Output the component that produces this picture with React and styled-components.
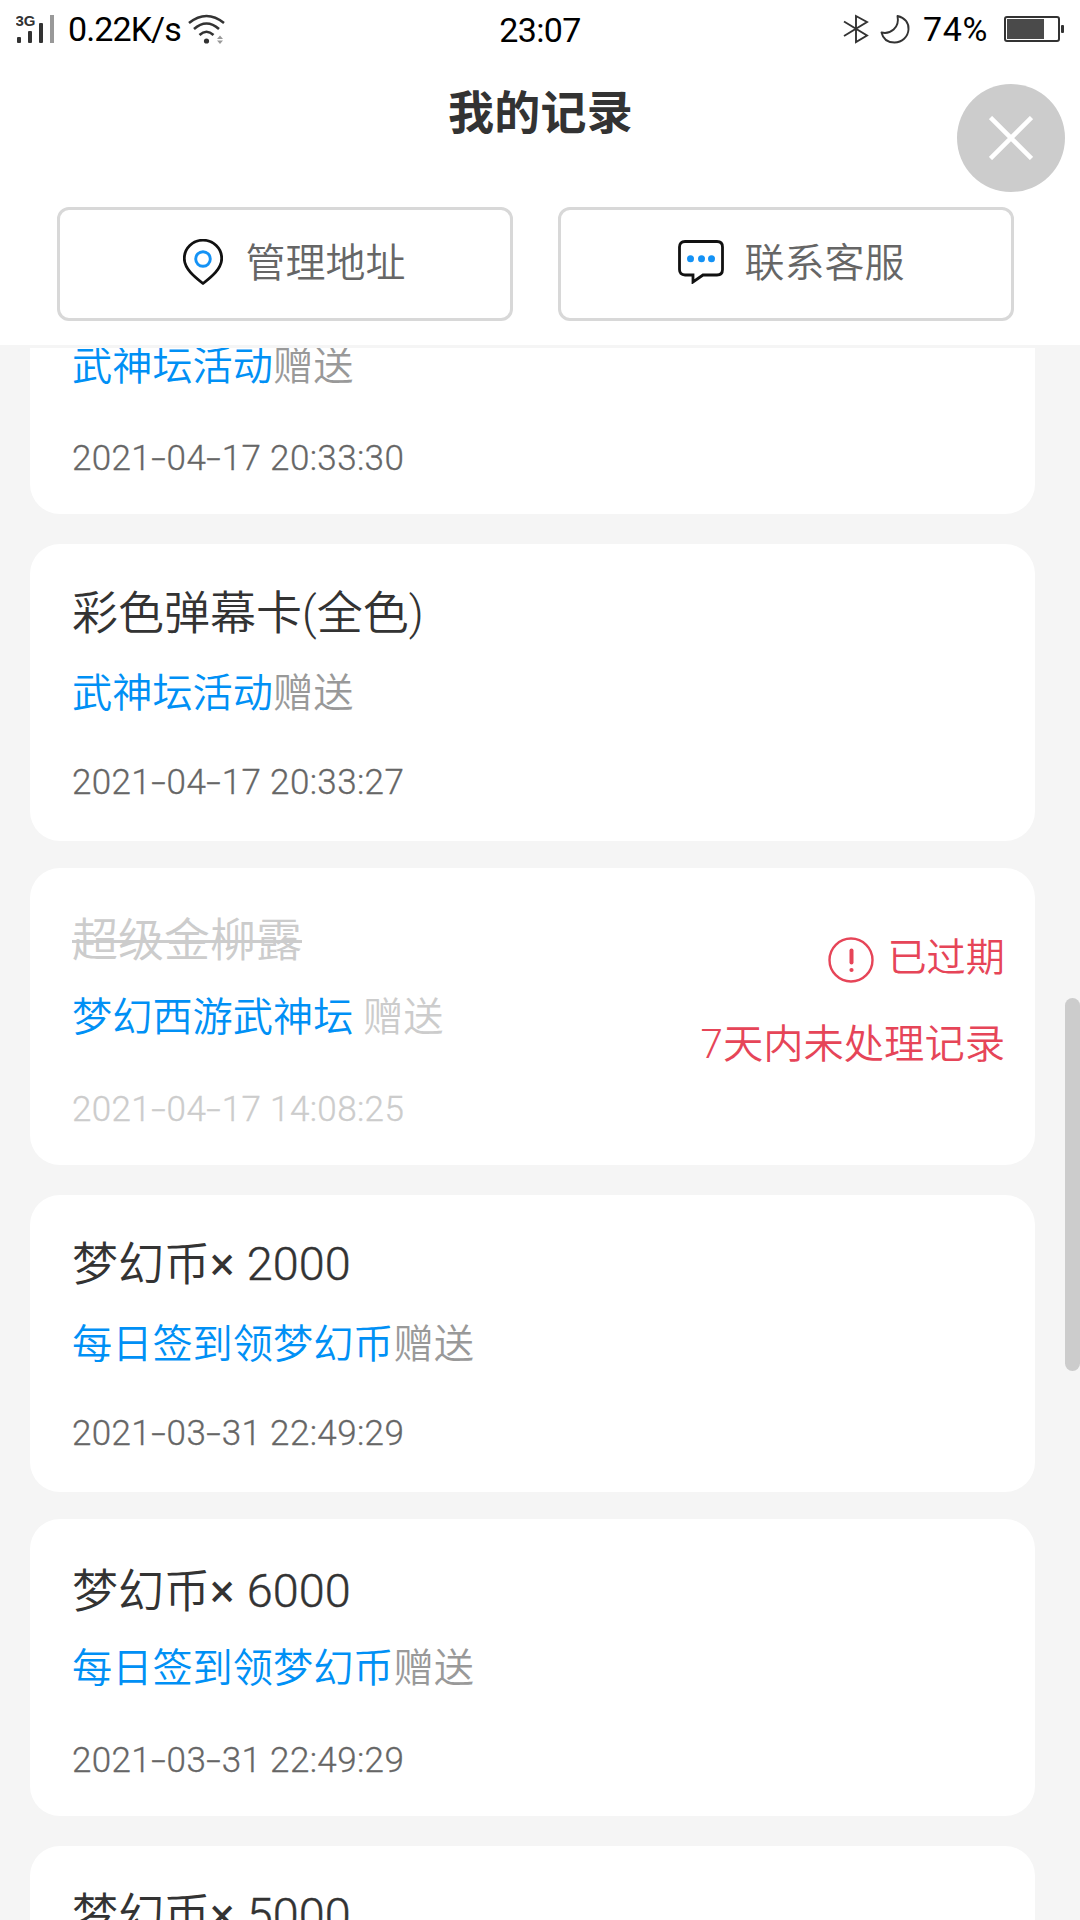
import React, { Fragment } from 'react';

// External packages
import styled, { createGlobalStyle, css } from 'styled-components';

const GlobalStyle = createGlobalStyle`
  * {
    box-sizing: border-box;
  }

  body {
    margin: 0;
    overflow: hidden;
    background: #f5f5f5;
    font-family: Roboto, 'Noto Sans CJK SC', sans-serif;
    font-weight: 350;
  }
`;

const Page = styled.div`
  display: flex;
  flex-direction: column;
  position: relative;
  width: 1080px;
  height: 1920px;
  overflow: hidden;
`;

const Header = styled.header`
  flex: none;
  height: 348px;
  background: #fff;
  border-bottom: 3px solid #f5f5f5;
`;

const StatusBar = styled.div`
  display: grid;
  grid-template-columns: 1fr auto 1fr;
  align-items: center;
  height: 55px;
  padding: 0 15px 0 16px;
  color: #000;
  font-family: Roboto, sans-serif;
  font-weight: 400;
  font-size: 34px;
  line-height: 54px;

  svg {
    display: block;
    flex: none;
  }
`;

const StatusGroup = styled.div`
  display: flex;
  align-items: center;
  justify-content: ${(props) => props.$align || 'flex-start'};
`;

const Speed = styled.span`
  margin: 0 7px 0 13px;
  letter-spacing: -0.9px;
`;

const Clock = styled.span`
  padding: 3px 1px 0 0;
  letter-spacing: -0.6px;
`;

const Percent = styled.span`
  margin: 0 16px 0 13px;
  letter-spacing: 0.6px;
`;

const Title = styled.h1`
  margin: 26px 0 0;
  padding-left: 1px;
  color: #333;
  font-size: 46px;
  font-weight: 700;
  letter-spacing: 0.3px;
  line-height: 64px;
  text-align: center;
`;

const Actions = styled.div`
  display: grid;
  grid-template-columns: 1fr 1fr;
  gap: 45px;
  padding: 62px 66px 0 57px;
`;

const ActionButton = styled.button`
  display: flex;
  align-items: center;
  justify-content: center;
  gap: ${(props) => props.$gap}px;
  height: 114px;
  padding: 0 0 4px ${(props) => props.$indent}px;
  background: #fff;
  border: 3px solid #d8d8d8;
  border-radius: 12px;
  color: #666;
  font: inherit;
  font-size: 40px;
  line-height: 56px;
`;

const ActionLabel = styled.span`
  padding-top: 4px;
`;

const CloseButton = styled.button`
  display: flex;
  align-items: center;
  justify-content: center;
  position: absolute;
  top: 84px;
  right: 15px;
  width: 108px;
  height: 108px;
  padding: 0;
  background: #ccc;
  border: 0;
  border-radius: 50%;
`;

const Records = styled.main`
  flex: 1;
  min-height: 0;
  overflow: hidden;
`;

const RecordTitle = styled.div`
  height: 64px;
  color: #333;
  font-size: 46px;
  line-height: 64px;
`;

const Times = styled.span`
  font-weight: 400;
`;

const Count = styled.span`
  margin-left: 1px;
  font-size: 46.8px;
  -webkit-text-stroke: 0.4px;
`;

const RecordSource = styled.div`
  height: 48px;
  margin-top: 25px;
  color: #999;
  font-size: 40.2px;
  line-height: 48px;
  white-space: pre;
`;

const SourceName = styled.span`
  color: #0090f5;
`;

const RecordDate = styled.div`
  height: 48px;
  margin-top: 41px;
  color: #666;
  font-size: 35px;
  letter-spacing: 0.36px;
  line-height: 48px;
  -webkit-text-stroke: 0.3px;
`;

const Dash = styled.span`
  display: inline-block;
  width: 15.5px;
  text-align: center;
  transform: scaleX(1.5);
`;

const Card = styled.article`
  display: flex;
  justify-content: space-between;
  height: 297px;
  margin: 0 45px 27px 30px;
  padding: 37px 30px 0 42px;
  background: #fff;
  border-radius: 30px;

  &:nth-child(odd) {
    margin-bottom: 30px;

    ${RecordTitle} {
      padding-top: 3px;
    }

    ${RecordDate} {
      padding-top: 3px;
    }
  }

  ${(props) => props.$scrolled && css`
    height: 166px;
    padding-top: 0;
    border-radius: 0 0 30px 30px;

    ${RecordSource} {
      margin-top: -5px;
    }
  `}

  ${(props) => props.$expired && css`
    ${RecordTitle} {
      color: #ccc;
      text-decoration: line-through;
      text-decoration-thickness: 3px;
    }

    ${RecordSource}, ${RecordDate} {
      color: #ccc;
    }
  `}
`;

const Notice = styled.div`
  display: flex;
  flex-direction: column;
  align-items: flex-end;
  gap: 39px;
  padding-top: 29px;
  color: #e64558;
  font-size: 40.3px;
  line-height: 48px;
`;

const NoticeStatus = styled.div`
  display: flex;
  align-items: center;
  gap: 13px;
  height: 48px;
  font-size: 39.2px;

  svg {
    margin-top: 4px;
  }
`;

const ScrollThumb = styled.div`
  position: absolute;
  top: 998px;
  right: 0;
  width: 15px;
  height: 373px;
  background: #ccc;
  border-radius: 7.5px;
`;

const records = [
  { id: 1, source: '武神坛活动', suffix: '赠送', date: '2021-04-17 20:33:30' },
  { id: 2, title: '彩色弹幕卡(全色)', source: '武神坛活动', suffix: '赠送', date: '2021-04-17 20:33:27' },
  { id: 3, title: '超级金柳露', source: '梦幻西游武神坛', suffix: ' 赠送', date: '2021-04-17 14:08:25', expired: true },
  { id: 4, title: '梦幻币', count: 2000, source: '每日签到领梦幻币', suffix: '赠送', date: '2021-03-31 22:49:29' },
  { id: 5, title: '梦幻币', count: 6000, source: '每日签到领梦幻币', suffix: '赠送', date: '2021-03-31 22:49:29' },
  { id: 6, title: '梦幻币', count: 5000 },
];

const SignalIcon = () => (
  <svg width="39" height="30" viewBox="0 0 39 30">
    <text x="-0.5" y="11.5" fontFamily="Liberation Sans" fontWeight="700" fontSize="14.5" textLength="20" lengthAdjust="spacingAndGlyphs" fill="#333">3G</text>
    <rect x="1" y="23" width="4" height="6" rx="1" fill="#333" />
    <rect x="12" y="17" width="4" height="12" rx="1" fill="#333" />
    <rect x="23" y="9" width="4" height="20" rx="1" fill="#333" />
    <rect x="34" y="1" width="4" height="28" fill="#999" />
  </svg>
);

const WifiIcon = () => (
  <svg width="37" height="30" viewBox="0 0 37 30" fill="none" stroke="#333" strokeWidth="2.6">
    <path d="M1 9Q18.500 -5 36 9" />
    <path d="M6 15Q18.500 4 31 15" />
    <path d="M11.500 21Q18.500 14.500 25.500 21" />
    <circle cx="18.500" cy="27" r="2.600" fill="#333" stroke="none" />
    <path d="M29 25L32 21.500L35 25ZM29 26.500L32 30L35 26.500Z" fill="#999" stroke="none" />
  </svg>
);

const BluetoothIcon = () => (
  <svg width="26" height="30" viewBox="0 0 26 30" fill="none" stroke="#333" strokeWidth="1.9">
    <path d="M1 7.500L24 21.500L13 28V2L24 8L1 22" />
  </svg>
);

const MoonIcon = () => (
  <svg width="41" height="30" viewBox="-11 0 41 30" fill="none" stroke="#333" strokeWidth="1.900" strokeLinejoin="round">
    <path d="M17.500 2C25 3.500 29 9 28.500 15.500C28 23 22 28.500 14.500 28.500C8 28.500 3 25 1.500 18.500C10 20.500 20 14 17.500 2Z" />
  </svg>
);

const BatteryIcon = () => (
  <svg width="61" height="28" viewBox="0 0 61 28">
    <rect x="1" y="2" width="54" height="24" rx="2" fill="none" stroke="#333" strokeWidth="2" />
    <rect x="3" y="4" width="37" height="20" fill="#4a4a4a" />
    <rect x="57" y="10" width="3" height="8" rx="1" fill="#333" />
  </svg>
);

const PinIcon = () => (
  <svg width="40" height="46" viewBox="0 0 40 46" fill="none">
    <path d="M20 44.500C11 37.500 1.300 29.500 1.300 19.500A18.700 18.300 0 0 1 38.700 19.500C38.700 29.500 29 37.500 20 44.500Z" stroke="#111" strokeWidth="2.800" strokeLinejoin="round" />
    <circle cx="20" cy="20" r="7.300" stroke="#1492f5" strokeWidth="2.900" />
  </svg>
);

const ChatIcon = () => (
  <svg width="46" height="44" viewBox="0 0 46 44" fill="none">
    <path d="M7 1.500H39Q44.500 1.500 44.500 7V29.500Q44.500 35 39 35H25L15 42V35H7Q1.500 35 1.500 29.500V7Q1.500 1.500 7 1.500Z" stroke="#111" strokeWidth="2.800" />
    <g fill="#1492f5">
      <circle cx="12.500" cy="18.800" r="3.500" />
      <circle cx="23.500" cy="18.800" r="3.500" />
      <circle cx="33.500" cy="18.800" r="3.500" />
    </g>
  </svg>
);

const CloseIcon = () => (
  <svg width="44" height="44" viewBox="0 0 44 44" stroke="#fff" strokeWidth="4.500">
    <path d="M1.500 1.500L42.500 42.500M42.500 1.500L1.500 42.500" />
  </svg>
);

const WarningIcon = () => (
  <svg width="46" height="46" viewBox="0 0 46 46" fill="none" stroke="#e64558">
    <circle cx="23" cy="23" r="21.500" strokeWidth="2.400" />
    <path d="M23.500 13.500V25.500" strokeWidth="4" strokeLinecap="round" />
    <circle cx="23.500" cy="33" r="2.100" fill="#e64558" stroke="none" />
  </svg>
);

const DateText = (props) => (
  <RecordDate>
    { props.value.split('-').map(( part, index ) => (
      <Fragment key={index}>
        { index > 0 && <Dash>-</Dash> }
        {part}
      </Fragment>
    )) }
  </RecordDate>
);

const RecordCard = (props) => (
  <Card $expired={props.expired} $scrolled={!props.title}>
    <div>
      { props.title && (
        <RecordTitle>
          {props.title}
          { props.count && <><Times>×</Times> <Count>{props.count}</Count></> }
        </RecordTitle>
      ) }
      { props.source && (
        <RecordSource>
          <SourceName>{props.source}</SourceName>{props.suffix}
        </RecordSource>
      ) }
      { props.date && <DateText value={props.date} /> }
    </div>
    { props.expired && (
      <Notice>
        <NoticeStatus>
          <WarningIcon />
          <span>已过期</span>
        </NoticeStatus>
        <div>7天内未处理记录</div>
      </Notice>
    ) }
  </Card>
);

const App = () => {
  return (
    <Fragment>
      <GlobalStyle />
      <Page>
        <Header>
          <StatusBar>
            <StatusGroup>
              <SignalIcon />
              <Speed>0.22K/s</Speed>
              <WifiIcon />
            </StatusGroup>
            <Clock>23:07</Clock>
            <StatusGroup $align="flex-end">
              <BluetoothIcon />
              <MoonIcon />
              <Percent>74%</Percent>
              <BatteryIcon />
            </StatusGroup>
          </StatusBar>
          <Title>我的记录</Title>
          <Actions>
            <ActionButton $gap={23} $indent={18}>
              <PinIcon />
              <ActionLabel>管理地址</ActionLabel>
            </ActionButton>
            <ActionButton $gap={21} $indent={10}>
              <ChatIcon />
              <ActionLabel>联系客服</ActionLabel>
            </ActionButton>
          </Actions>
          <CloseButton>
            <CloseIcon />
          </CloseButton>
        </Header>
        <Records>
          { records.map(( record ) => (
            <RecordCard key={record.id} {...record} />
          )) }
        </Records>
        <ScrollThumb />
      </Page>
    </Fragment>
  );
};

export default App;
